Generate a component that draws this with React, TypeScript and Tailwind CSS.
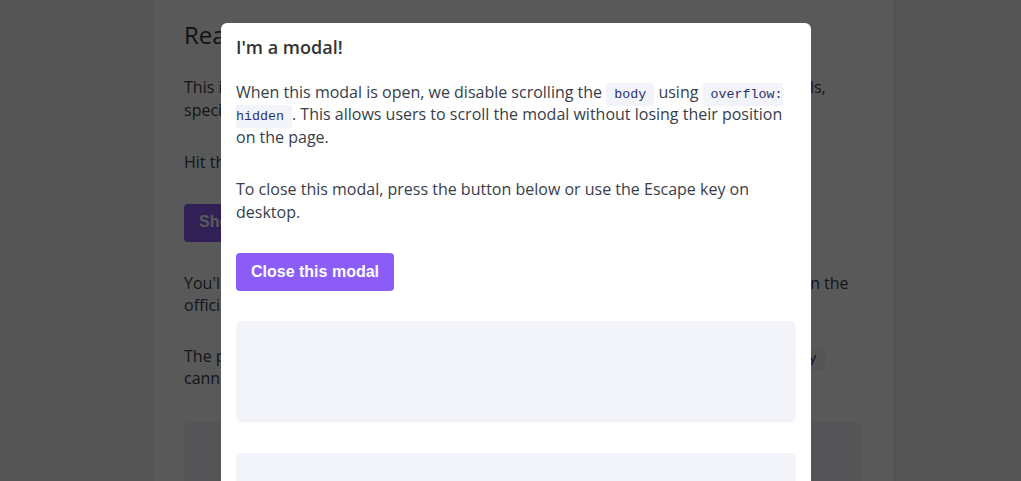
import React from "react"

const codeCls =
  "rounded-[4px] bg-[#f3f4f9] px-2 py-[4px] text-[13.33px] leading-none text-[#2b3270] [font-family:'Liberation_Mono',monospace]"

function Page() {
  return (
    <div className="min-h-screen bg-[#f1f1f1] [font-family:'Open_Sans',sans-serif]">
      <div className="ml-[153px] w-[740px] min-h-screen bg-white px-[31px] pt-[20px] text-[16px] leading-[22.5px] text-[#383d4a]">
        <h1 className="text-[24px] leading-[29px] font-normal text-[#333]">Really long page</h1>
        <p className="mt-[27px]">
          This is a very long page that shows how we lock the scroll position when using modals,
          <br />
          specifically on iOS Safari, which ignores overflow hidden on the body element.
        </p>
        <p className="mt-[30px]">Hit the button below to open the modal.</p>
        <button className="mt-[30px] h-[38px] rounded-[4px] bg-[#8b5cf6] px-[15px] text-[16px] font-bold text-white [font-family:'Liberation_Sans',Arial,sans-serif]">
          Show the modal
        </button>
        <p className="mt-[30px]">
          You'll notice the page behind the modal doesn't move while it is open, as described in the
          <br />
          official documentation for the dialog element.
        </p>
        <p className="mt-[28px]">
          The page uses a few tricks to make it work, mostly by toggling styles as{" "}
          <code className={codeCls}>overscroll-y</code>
          <br />
          cannot be scrolled by touch events anymore.
        </p>
        <div className="mt-[32px] h-[300px] rounded-md bg-[#f3f4f9]" />
      </div>
    </div>
  )
}

function Modal() {
  return (
    <div className="fixed inset-0 overflow-hidden bg-black/65">
      <div className="ml-[221px] mt-[23px] w-[590px] min-h-[600px] rounded-t-md bg-white px-[15px] pt-[15px] text-[16px] leading-[22.5px] text-[#383d4a] [font-family:'Open_Sans',sans-serif]">
        <h2 className="text-[18px] leading-[18px] font-semibold text-[#333]">I'm a modal!</h2>
        <p className="mt-[24.5px]">
          When this modal is open, we disable scrolling the <code className={codeCls}>body</code> using{" "}
          <code className={codeCls}>overflow: hidden</code>. This allows users to scroll the modal without losing
          their position on the page.
        </p>
        <p className="mt-[30px]">To close this modal, press the button below or use the Escape key on desktop.</p>
        <button className="mt-[30px] h-[38px] rounded-[4px] bg-[#8b5cf6] px-[15px] text-[16px] font-bold text-white [font-family:'Liberation_Sans',Arial,sans-serif]">
          Close this modal
        </button>
        <div className="mt-[30px] h-[101px] rounded-md bg-[#f3f4f9]" />
        <div className="mt-[31px] h-[101px] rounded-md bg-[#f3f4f9]" />
      </div>
    </div>
  )
}

export default function App() {
  return (
    <div className="relative h-screen overflow-hidden">
      <Page />
      <Modal />
    </div>
  )
}
